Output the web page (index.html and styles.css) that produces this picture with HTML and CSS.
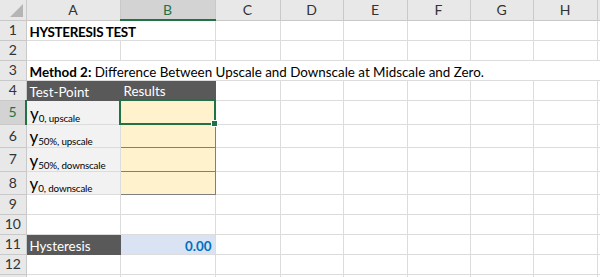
FILE: index.html
```html
<!DOCTYPE html>
<html>
<head>
<meta charset="utf-8">
<link rel="stylesheet" href="styles.css">
</head>
<body>
<table class="sheet">
  <colgroup>
    <col class="c-rh"><col class="c-a"><col class="c-b"><col class="c-c"><col class="c-d"><col class="c-e"><col class="c-f"><col class="c-g"><col class="c-h"><col class="c-i">
  </colgroup>
  <tr class="r-head">
    <th class="corner"><span class="tri"></span></th>
    <th class="ch">A</th><th class="ch sel">B</th><th class="ch">C</th><th class="ch">D</th><th class="ch">E</th><th class="ch">F</th><th class="ch">G</th><th class="ch">H</th><th class="ch"></th>
  </tr>
  <tr class="r-std">
    <th class="rh">1</th><td class="title" colspan="2">HYSTERESIS TEST</td><td></td><td></td><td></td><td></td><td></td><td></td><td></td>
  </tr>
  <tr class="r-std">
    <th class="rh">2</th><td></td><td></td><td></td><td></td><td></td><td></td><td></td><td></td><td></td>
  </tr>
  <tr class="r-std">
    <th class="rh">3</th><td class="method" colspan="9"><b>Method 2:</b> Difference Between Upscale and Downscale at Midscale and Zero.</td>
  </tr>
  <tr class="r-std">
    <th class="rh">4</th><td class="dark">Test-Point</td><td class="dark">Results</td><td></td><td></td><td></td><td></td><td></td><td></td><td></td>
  </tr>
  <tr class="r-tall">
    <th class="rh rsel">5</th><td class="tp"><span class="y">y</span><sub>0, upscale</sub></td><td class="res active"><span class="handle"></span></td><td></td><td></td><td></td><td></td><td></td><td></td><td></td>
  </tr>
  <tr class="r-tall2">
    <th class="rh">6</th><td class="tp"><span class="y">y</span><sub>50%, upscale</sub></td><td class="res"></td><td></td><td></td><td></td><td></td><td></td><td></td><td></td>
  </tr>
  <tr class="r-tall">
    <th class="rh">7</th><td class="tp"><span class="y">y</span><sub>50%, downscale</sub></td><td class="res"></td><td></td><td></td><td></td><td></td><td></td><td></td><td></td>
  </tr>
  <tr class="r-tall2">
    <th class="rh">8</th><td class="tp"><span class="y">y</span><sub>0, downscale</sub></td><td class="res"></td><td></td><td></td><td></td><td></td><td></td><td></td><td></td>
  </tr>
  <tr class="r-std">
    <th class="rh">9</th><td></td><td></td><td></td><td></td><td></td><td></td><td></td><td></td><td></td>
  </tr>
  <tr class="r-std">
    <th class="rh">10</th><td></td><td></td><td></td><td></td><td></td><td></td><td></td><td></td><td></td>
  </tr>
  <tr class="r-std">
    <th class="rh">11</th><td class="dark">Hysteresis</td><td class="val">0.00</td><td></td><td></td><td></td><td></td><td></td><td></td><td></td>
  </tr>
  <tr class="r-std">
    <th class="rh">12</th><td></td><td></td><td></td><td></td><td></td><td></td><td></td><td></td><td></td>
  </tr>
  <tr class="r-std">
    <th class="rh"></th><td></td><td></td><td></td><td></td><td></td><td></td><td></td><td></td><td></td>
  </tr>
</table>
</body>
</html>
```
FILE: styles.css
```css
html, body {
  margin: 0;
  padding: 0;
  background: #ffffff;
  overflow: hidden;
}
.sheet {
  border-collapse: collapse;
  table-layout: fixed;
  width: 620px;
  font-family: "Lato", "Open Sans", sans-serif;
  font-size: 13.4px;
  color: #000;
}
.c-rh { width: 26px; }
.c-a { width: 94px; }
.c-b { width: 95px; }
.c-c { width: 65px; }
.c-d { width: 63px; }
.c-e { width: 64px; }
.c-f { width: 63px; }
.c-g { width: 63px; }
.c-h { width: 64px; }
.c-i { width: 23px; }

.sheet td, .sheet th {
  padding: 0 0 1px 3px;
  border: 1px solid #dcdcdc;
  white-space: nowrap;
  overflow: visible;
  vertical-align: bottom;
  text-align: left;
  font-weight: normal;
  line-height: 14px;
}
.r-head { height: 20px; }
.r-std { height: 20px; }
.r-tall { height: 24px; }
.r-tall2 { height: 23px; }

.sheet th.ch {
  background: #e8e8e8;
  border-color: #c9c9c9;
  border-top: none;
  text-align: center;
  padding: 0;
  vertical-align: middle;
  font-size: 14px;
  color: #333333;
}
.sheet th.ch.sel {
  background: #d3d3d3;
  color: #217346;
  border-bottom: 2px solid #217346;
}
.sheet th.corner {
  background: #e8e8e8;
  border-color: #c9c9c9;
  border-top: none;
  border-left: none;
  position: relative;
  padding: 0;
}
.tri {
  position: absolute;
  right: 3px;
  bottom: 3px;
  width: 0;
  height: 0;
  border-left: 13px solid transparent;
  border-bottom: 13px solid #b5b5b5;
}
.sheet th.rh {
  background: #e8e8e8;
  border-color: #c9c9c9;
  border-left: none;
  text-align: center;
  padding: 0;
  vertical-align: middle;
  font-size: 14px;
  color: #333333;
}
.sheet th.rh.rsel {
  background: #d3d3d3;
  color: #217346;
  border-right: 2px solid #217346;
}
.sheet td.title {
  font-weight: bold;
  letter-spacing: -0.3px;
}
.sheet td.dark {
  background: #595959;
  color: #ffffff;
  border-color: #595959;
}
.sheet td.tp {
  background: #f2f2f2;
  padding-bottom: 2px;
}
.y {
  font-size: 17px;
  line-height: 14px;
}
sub {
  font-size: 9.8px;
  letter-spacing: -0.15px;
  vertical-align: -2px;
  line-height: 0;
}
.sheet td.res {
  background: #fff2cc;
  border: 1px solid #7f7f7f;
}
.sheet td.res.active {
  border: 2px solid #217346;
  position: relative;
}
.handle {
  position: absolute;
  right: -4px;
  bottom: -4px;
  width: 5px;
  height: 5px;
  background: #217346;
  border: 1px solid #fff;
}
.sheet td.val {
  background: #dae3f3;
  color: #0070c0;
  font-weight: bold;
  text-align: right;
  padding: 0 3px 1px 0;
}
```
